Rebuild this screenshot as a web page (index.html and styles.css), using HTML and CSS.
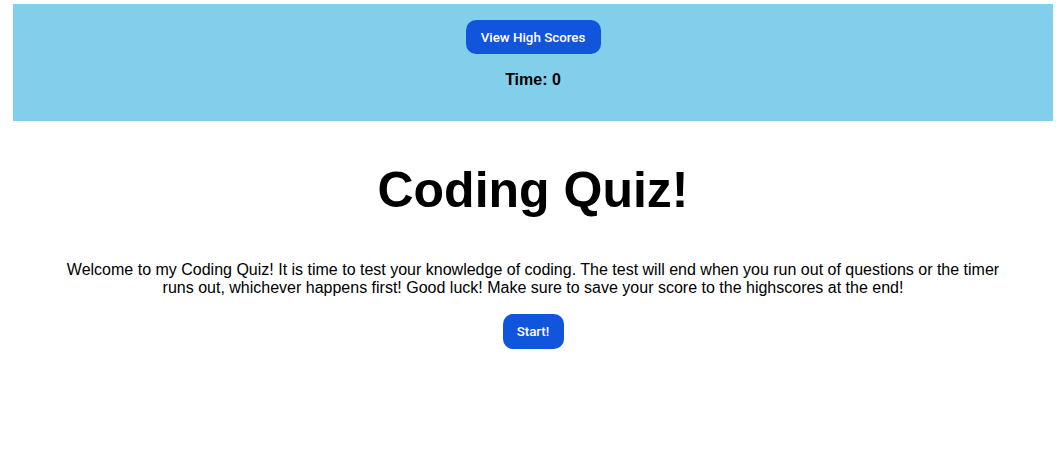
FILE: index.html
```html
<!DOCTYPE html>
<html lang="en">
<head>
<meta charset="utf-8">
<title>Coding Quiz</title>
<link rel="stylesheet" href="styles.css">
</head>
<body>
<header class="top-bar">
  <button class="btn btn-scores" type="button">View High Scores</button>
  <p class="timer">Time: 0</p>
</header>
<main class="intro">
  <h1 class="title">Coding Quiz!</h1>
  <p class="description">Welcome to my Coding Quiz! It is time to test your knowledge of coding. The test will end when you run out of questions or the timer runs out, whichever happens first! Good luck! Make sure to save your score to the highscores at the end!</p>
  <button class="btn btn-start" type="button">Start!</button>
</main>
</body>
</html>
```
FILE: styles.css
```css
html, body {
  margin: 0;
  padding: 0;
  background: #ffffff;
}

body {
  padding: 4px 7px 0 13px;
  font-family: "Liberation Sans", Arial, sans-serif;
  color: #000000;
}

.top-bar {
  background: #81cfeb;
  height: 117px;
  box-sizing: border-box;
  padding-top: 16px;
  display: flex;
  flex-direction: column;
  align-items: center;
}

.btn {
  background: #1155dc;
  color: #ffffff;
  border: none;
  border-radius: 10px;
  font-family: Roboto, "Liberation Sans", Arial, sans-serif;
  font-size: 13.33px;
  font-weight: 500;
  line-height: 15px;
  cursor: pointer;
}

.btn-scores {
  width: 135px;
  height: 34px;
}

.timer {
  margin: 17px 0 0;
  font-size: 16px;
  font-weight: bold;
  line-height: 18px;
}

.intro {
  display: flex;
  flex-direction: column;
  align-items: center;
  text-align: center;
}

.title {
  margin: 41px 0 0;
  font-size: 50px;
  line-height: 57px;
  font-weight: bold;
}

.description {
  margin: 42px 50px 17px;
  font-size: 16px;
  line-height: 18px;
}

.btn-start {
  width: 61px;
  height: 35px;
}
```
